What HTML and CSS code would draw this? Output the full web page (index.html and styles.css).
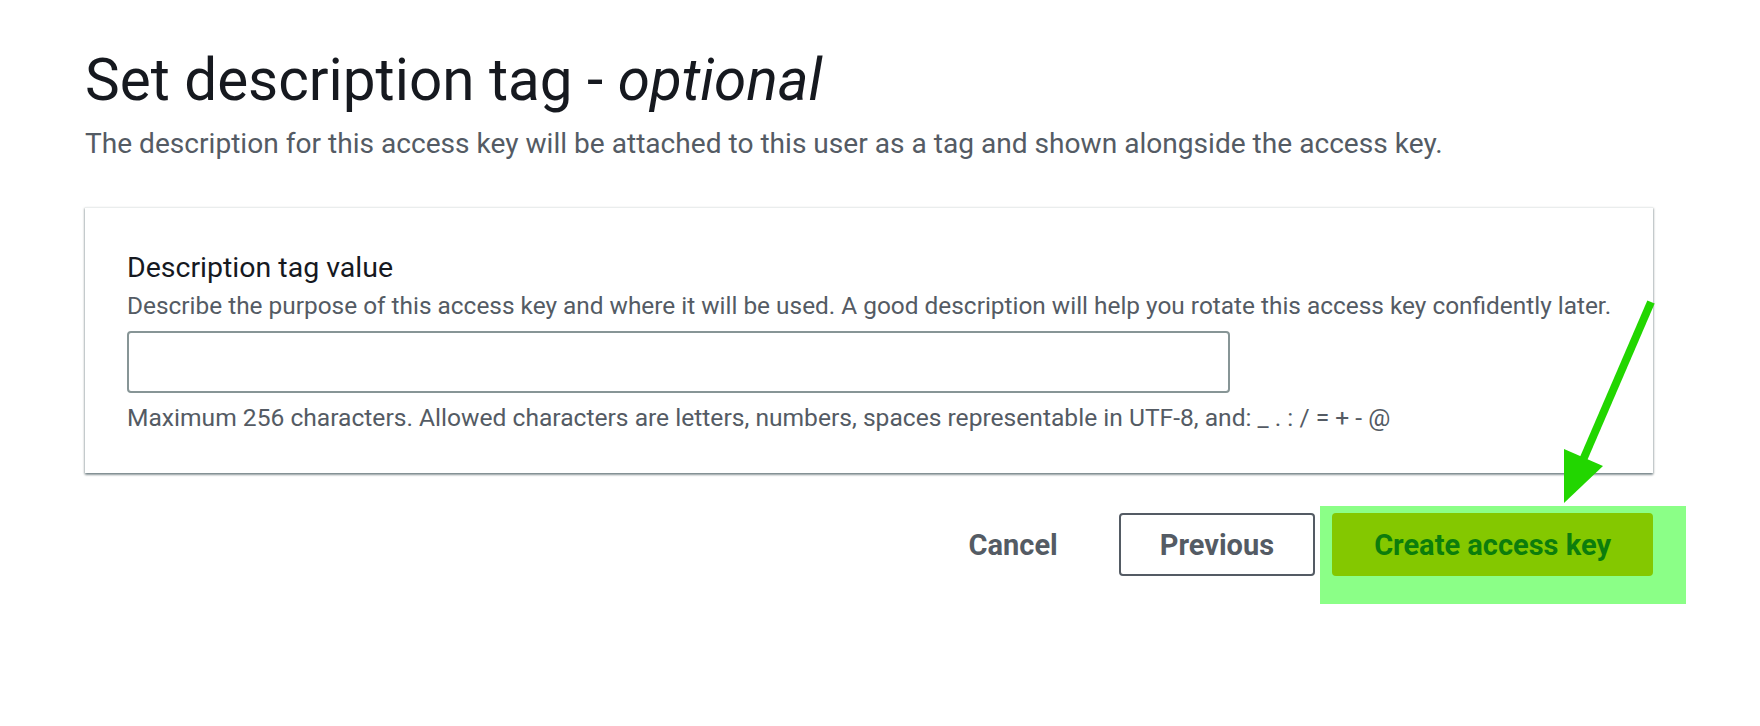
FILE: index.html
```html
<!DOCTYPE html>
<html lang="en">
<head>
<meta charset="utf-8">
<title>Set description tag</title>
<link rel="stylesheet" href="styles.css">
</head>
<body>
<main class="page">
  <h1 class="title">Set description tag - <i class="title-opt">optional</i></h1>
  <p class="subtitle">The description for this access key will be attached to this user as a tag and shown alongside the access key.</p>

  <section class="card">
    <label class="label" for="desc-tag">Description tag value</label>
    <p class="desc">Describe the purpose of this access key and where it will be used. A good description will help you rotate this access key confidently later.</p>
    <input class="input" id="desc-tag" type="text">
    <p class="constraint">Maximum 256 characters. Allowed characters are letters, numbers, spaces representable in UTF-8, and: _ . : / = + - @</p>
  </section>

  <div class="actions">
    <button class="btn btn-link" type="button">Cancel</button>
    <button class="btn btn-normal" type="button">Previous</button>
    <div class="highlight">
      <button class="btn btn-primary" type="button">Create access key</button>
    </div>
  </div>

  <svg class="arrow" width="1760" height="726" viewBox="0 0 1760 726" aria-hidden="true">
    <line x1="1651" y1="302" x2="1583" y2="460" stroke="#22d600" stroke-width="8"/>
    <polygon points="1564,449 1603,466 1564,503" fill="#22d600"/>
  </svg>
</main>
</body>
</html>
```

FILE: styles.css
```css
* {
  box-sizing: border-box;
}

html, body {
  margin: 0;
  padding: 0;
  background: #ffffff;
}

body {
  font-family: Roboto, "Open Sans", Arial, sans-serif;
  color: #16191f;
}

.page {
  position: relative;
  width: 1760px;
  height: 726px;
  padding: 46px 107px 0 85px;
  overflow: hidden;
}

.title {
  margin: 0;
  font-size: 58.4px;
  line-height: 68px;
  font-weight: 400;
  color: #16191f;
}

.title-opt {
  font-style: italic;
}

.subtitle {
  margin: 12px 0 0 0;
  font-size: 28.1px;
  line-height: 36px;
  color: #545b64;
}

.card {
  margin-top: 45px;
  padding: 42px 40px 40px 42px;
  background: #ffffff;
  border-top: 1px solid #eaeded;
  box-shadow: 0 2px 2px 0 rgba(0, 28, 36, 0.35),
              1px 1px 2px 0 rgba(0, 28, 36, 0.18),
              -1px 1px 2px 0 rgba(0, 28, 36, 0.18);
  display: flex;
  flex-direction: column;
  align-items: flex-start;
}

.label {
  display: block;
  font-size: 28.5px;
  line-height: 36px;
  color: #16191f;
}

.desc {
  margin: 5px 0 0 0;
  font-size: 24.4px;
  line-height: 30px;
  color: #545b64;
}

.input {
  margin-top: 10px;
  width: 1103px;
  height: 62px;
  border: 2px solid #879596;
  border-radius: 4px;
  background: #ffffff;
  font: inherit;
  outline: none;
}

.constraint {
  margin: 10px 0 0 0;
  font-size: 24.6px;
  line-height: 30px;
  color: #545b64;
}

.actions {
  margin-top: 40px;
  display: flex;
  justify-content: flex-end;
  align-items: center;
  gap: 17px;
}

.btn {
  height: 63px;
  padding: 0 40px;
  font-family: Roboto, "Open Sans", Arial, sans-serif;
  font-size: 29px;
  font-weight: 700;
  border-radius: 4px;
  cursor: pointer;
  background: transparent;
}

.btn-link {
  border: none;
  padding: 0 20px;
  margin-right: 24px;
  color: #545b64;
}

.btn-normal {
  padding: 0 39px;
  border: 2px solid #545b64;
  color: #545b64;
  background: #ffffff;
}

.highlight {
  position: relative;
  z-index: 0;
}

.highlight::before {
  content: "";
  position: absolute;
  top: -7px;
  right: -33px;
  bottom: -28px;
  left: -12px;
  background: #8bff87;
  z-index: -1;
}

.btn-primary {
  display: block;
  padding: 0 42px;
  border: none;
  background: #84c800;
  color: #0c7d0c;
}

.arrow {
  position: absolute;
  top: 0;
  left: 0;
  pointer-events: none;
}
```
